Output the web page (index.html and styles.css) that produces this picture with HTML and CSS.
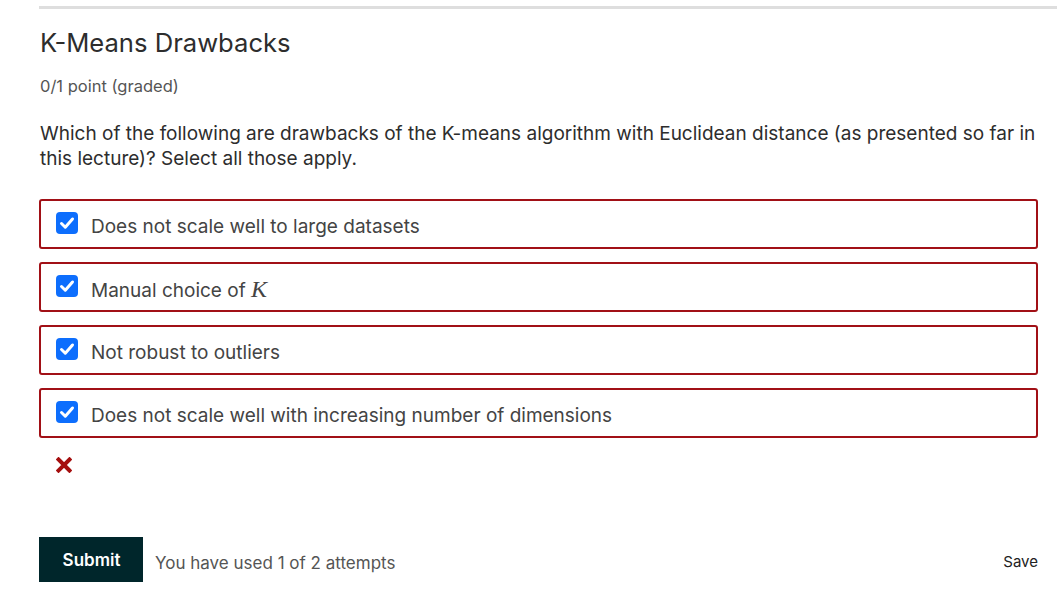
FILE: index.html
```html
<!DOCTYPE html>
<html>
<head>
<meta charset="utf-8">
<link rel="stylesheet" href="styles.css">
</head>
<body>
<div class="page">
  <div class="rule"></div>
  <h2 class="title">K-Means Drawbacks</h2>
  <div class="points">0/1 point (graded)</div>
  <p class="question">Which of the following are drawbacks of the K-means algorithm with Euclidean distance (as presented so far in this lecture)? Select all those apply.</p>
  <div class="options">
    <label class="option"><span class="check"><svg viewBox="0 0 22 22" width="22" height="22"><path d="M5.5 11.5 L9.3 15.2 L16.5 7" fill="none" stroke="#fff" stroke-width="3" stroke-linecap="round" stroke-linejoin="round"/></svg></span><span class="label">Does not scale well to large datasets</span></label>
    <label class="option"><span class="check"><svg viewBox="0 0 22 22" width="22" height="22"><path d="M5.5 11.5 L9.3 15.2 L16.5 7" fill="none" stroke="#fff" stroke-width="3" stroke-linecap="round" stroke-linejoin="round"/></svg></span><span class="label">Manual choice of <span class="math">K</span></span></label>
    <label class="option"><span class="check"><svg viewBox="0 0 22 22" width="22" height="22"><path d="M5.5 11.5 L9.3 15.2 L16.5 7" fill="none" stroke="#fff" stroke-width="3" stroke-linecap="round" stroke-linejoin="round"/></svg></span><span class="label">Not robust to outliers</span></label>
    <label class="option"><span class="check"><svg viewBox="0 0 22 22" width="22" height="22"><path d="M5.5 11.5 L9.3 15.2 L16.5 7" fill="none" stroke="#fff" stroke-width="3" stroke-linecap="round" stroke-linejoin="round"/></svg></span><span class="label">Does not scale well with increasing number of dimensions</span></label>
  </div>
  <div class="status"><svg viewBox="0 0 16 16" width="16" height="16"><path d="M2.5 2.5 L13.5 13.5 M13.5 2.5 L2.5 13.5" stroke="#a50f0f" stroke-width="4" stroke-linecap="square"/></svg></div>
  <div class="actions">
    <button class="submit">Submit</button>
    <span class="attempts">You have used 1 of 2 attempts</span>
    <span class="save">Save</span>
  </div>
</div>
</body>
</html>
```
FILE: styles.css
```css
html, body {
  margin: 0;
  padding: 0;
  background: #fff;
}
body {
  font-family: Inter, "Noto Sans", sans-serif;
  color: #333;
}
.page {
  padding: 6px 19px 0 39px;
}
.rule {
  height: 3px;
  background: #dedede;
  margin-right: -19px;
}
.title {
  margin: 0;
  padding-top: 18px;
  padding-left: 1px;
  font-size: 25.6px;
  font-weight: 400;
  line-height: 32px;
  color: #2d2d2d;
}
.points {
  margin-top: 17px;
  padding-left: 1px;
  font-size: 16.5px;
  line-height: 20px;
  color: #555;
}
.question {
  margin: 25px 0 0;
  padding-left: 1px;
  font-size: 19px;
  line-height: 25px;
  color: #2d2d2d;
}
.options {
  margin-top: 28px;
  display: flex;
  flex-direction: column;
  gap: 13px;
}
.option {
  display: flex;
  align-items: center;
  height: 50px;
  box-sizing: border-box;
  border: 2px solid #a11016;
  border-radius: 3px;
  padding-left: 15px;
}
.check {
  width: 22px;
  height: 22px;
  border-radius: 4px;
  background: #0d6efd;
  display: flex;
  align-items: center;
  justify-content: center;
  flex: none;
  margin-top: -2px;
}
.check svg { display: block; }
.label {
  margin-left: 13px;
  padding-top: 4px;
  font-size: 19px;
  color: #444;
}
.math {
  font-family: "Liberation Serif", "DejaVu Serif", serif;
  font-style: italic;
  font-size: 24px;
}
.status {
  margin-top: 19px;
  padding-left: 17px;
  height: 16px;
}
.status svg { display: block; }
.actions {
  margin-top: 64px;
  display: flex;
  align-items: center;
}
.submit {
  width: 104px;
  height: 45px;
  background: #00262b;
  color: #fff;
  border: none;
  font-family: Inter, sans-serif;
  font-size: 17px;
  font-weight: 600;
  padding: 0 0 0 1px;
  cursor: pointer;
}
.attempts {
  margin-left: 12px;
  margin-top: 7px;
  font-size: 17px;
  color: #555;
}
.save {
  margin-left: auto;
  margin-top: 3px;
  font-size: 15px;
  color: #222;
}
```
